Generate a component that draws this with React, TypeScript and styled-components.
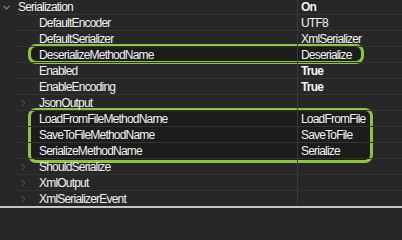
import React from "react";
import styled, { createGlobalStyle } from "styled-components";

const GlobalStyle = createGlobalStyle`
  html, body {
    margin: 0;
    padding: 0;
    background: #262626;
    overflow: hidden;
  }
`;

const Panel = styled.div`
  position: relative;
  width: 402px;
  height: 208px;
  background: #272727;
  display: flex;
  flex-direction: column;
  overflow: hidden;
  font-family: "Liberation Sans", Arial, sans-serif;
  font-size: 12px;
  letter-spacing: -0.8px;
  color: #f2f2f2;
`;

const List = styled.div`
  flex: 1;
  margin-top: -1px;
  position: relative;
  z-index: 1;
  overflow: hidden;
`;

const Row = styled.div`
  display: grid;
  grid-template-columns: 16px 281px 1fr;
  height: 16px;
`;

const Gutter = styled.div`
  display: flex;
  align-items: center;
  justify-content: center;
  padding-right: 3px;
`;

const NameCell = styled.div<{ $level: number }>`
  position: relative;
  display: flex;
  align-items: center;
  box-sizing: border-box;
  border-bottom: 1px solid #333333;
  padding-left: ${(p) => (p.$level === 0 ? 2 : 23)}px;
  padding-top: 1px;
  white-space: nowrap;
`;

const ValueCell = styled.div<{ $bold?: boolean }>`
  display: flex;
  align-items: center;
  box-sizing: border-box;
  border-bottom: 1px solid #333333;
  border-left: 1px solid #3a3a3a;
  padding-left: 3px;
  padding-top: 1px;
  font-weight: ${(p) => (p.$bold ? 700 : 400)};
  white-space: nowrap;
`;

const Expander = styled.span`
  position: absolute;
  left: 5px;
  top: 4px;
  display: flex;
`;

const Highlight = styled.div<{ $top: number; $height: number; $width: number }>`
  position: absolute;
  left: 28px;
  top: ${(p) => p.$top}px;
  width: ${(p) => p.$width}px;
  height: ${(p) => p.$height}px;
  box-sizing: border-box;
  border: 3px solid #8cc63f;
  border-radius: 8px;
  background: #1c1c1c;
  z-index: 0;
`;

const Footer = styled.div`
  height: 2px;
  background: #c4c4c4;
  position: relative;
  z-index: 2;
`;

const ChevronDown = () => (
  <svg width="7" height="5" viewBox="0 0 7 5">
    <path d="M0.5 0.8 L3.5 3.8 L6.5 0.8" fill="none" stroke="#8a8a8a" strokeWidth="1.2" />
  </svg>
);

const ChevronRight = () => (
  <svg width="5" height="8" viewBox="0 0 5 8">
    <path d="M0.8 0.8 L3.8 4 L0.8 7.2" fill="none" stroke="#4c4c4c" strokeWidth="1.2" />
  </svg>
);

type Item = {
  name: string;
  value?: string;
  bold?: boolean;
  level: number;
  collapsed?: boolean;
  expanded?: boolean;
};

const items: Item[] = [
  { name: "Serialization", value: "On", bold: true, level: 0, expanded: true },
  { name: "DefaultEncoder", value: "UTF8", level: 1 },
  { name: "DefaultSerializer", value: "XmlSerializer", level: 1 },
  { name: "DeserializeMethodName", value: "Deserialize", level: 1 },
  { name: "Enabled", value: "True", bold: true, level: 1 },
  { name: "EnableEncoding", value: "True", bold: true, level: 1 },
  { name: "JsonOutput", value: "", level: 1, collapsed: true },
  { name: "LoadFromFileMethodName", value: "LoadFromFile", level: 1 },
  { name: "SaveToFileMethodName", value: "SaveToFile", level: 1 },
  { name: "SerializeMethodName", value: "Serialize", level: 1 },
  { name: "ShouldSerialize", value: "", level: 1, collapsed: true },
  { name: "XmlOutput", value: "", level: 1, collapsed: true },
  { name: "XmlSerializerEvent", value: "", level: 1, collapsed: true },
];

export default function App() {
  return (
    <>
      <GlobalStyle />
      <Panel>
        <Highlight $top={44} $height={20} $width={336} />
        <Highlight $top={108} $height={55} $width={345} />
        <List>
          {items.map((it) => (
            <Row key={it.name}>
              <Gutter>{it.expanded ? <ChevronDown /> : null}</Gutter>
              <NameCell $level={it.level}>
                {it.collapsed ? (
                  <Expander>
                    <ChevronRight />
                  </Expander>
                ) : null}
                {it.name}
              </NameCell>
              <ValueCell $bold={it.bold}>{it.value}</ValueCell>
            </Row>
          ))}
        </List>
        <Footer />
      </Panel>
    </>
  );
}
